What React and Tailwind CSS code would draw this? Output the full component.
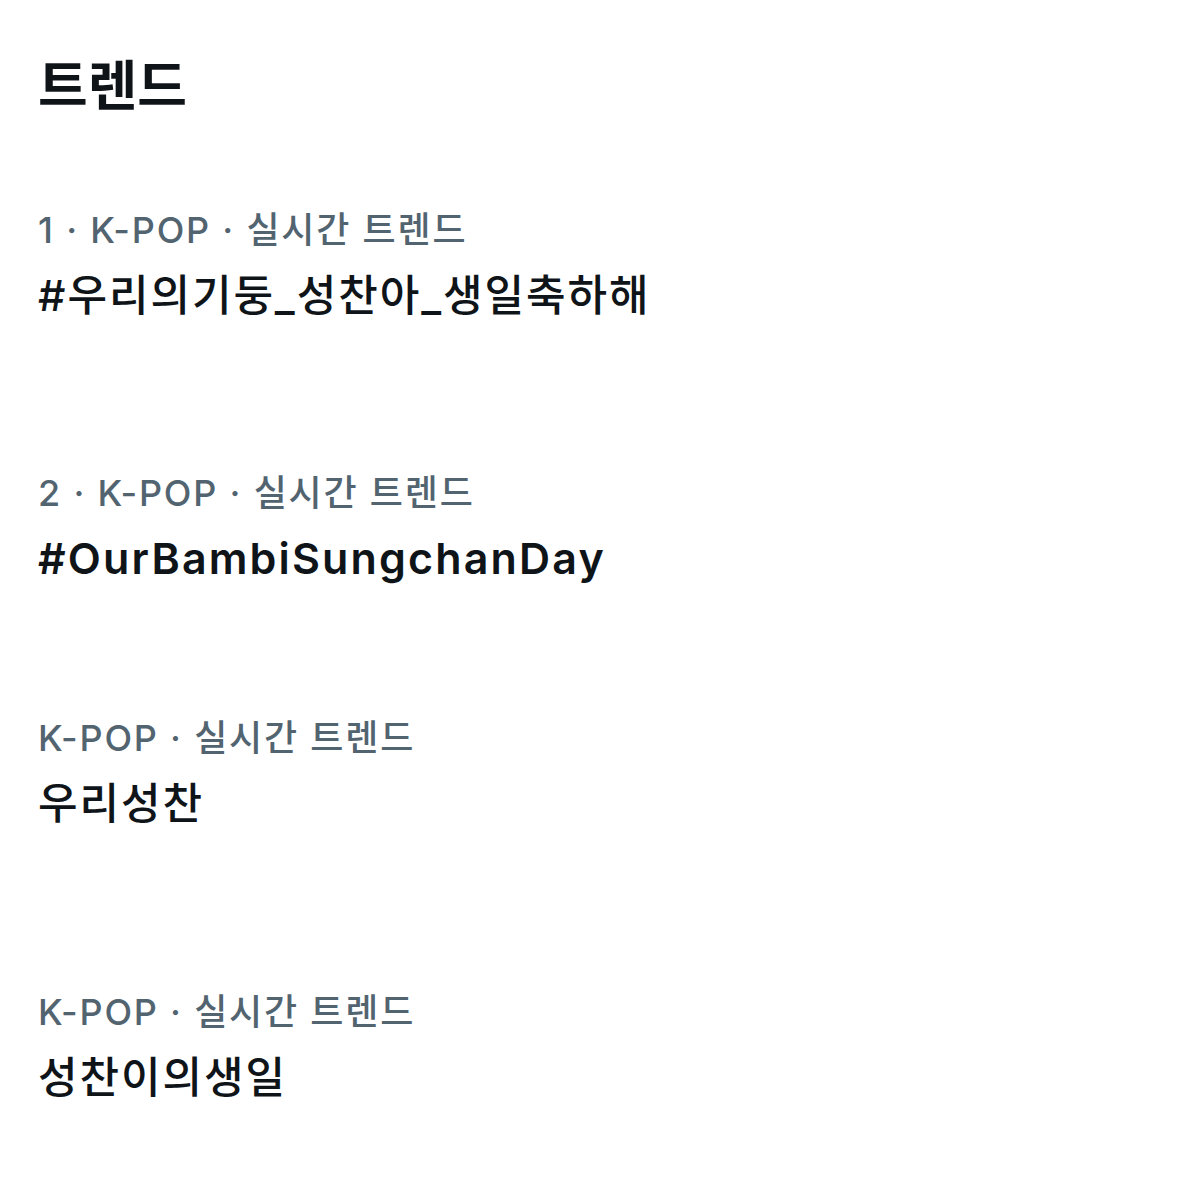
const trends = [
  { meta: '1 · K-POP · 실시간 트렌드', name: '#우리의기둥_성찬아_생일축하해', gap: 'mt-0' },
  { meta: '2 · K-POP · 실시간 트렌드', name: '#OurBambiSungchanDay', gap: 'mt-[150px]', latin: true },
  { meta: 'K-POP · 실시간 트렌드', name: '우리성찬', gap: 'mt-[132px]' },
  { meta: 'K-POP · 실시간 트렌드', name: '성찬이의생일', gap: 'mt-[161px]' },
]

export default function App() {
  return (
    <div
      className="min-h-screen w-[1200px] bg-white pl-[38px] pt-[55px]"
      style={{ fontFamily: 'Inter, "Noto Sans CJK KR", sans-serif' }}
    >
      {/* Header */}
      <h1 className="text-[54px] leading-[64px] font-bold text-[#0f1419]">트렌드</h1>

      {/* Trend list */}
      <div className="mt-[89px] flex flex-col">
        {trends.map((t, i) => (
          <div key={i} className={t.gap}>
            <div className="text-[36px] leading-[44px] tracking-[1.8px] text-[#536471] font-medium">{t.meta}</div>
            <div
              className={
                t.latin
                  ? 'mt-[17px] text-[43px] leading-[52px] tracking-[0.05em] font-semibold text-[#0f1419]'
                  : 'mt-[17px] text-[43px] leading-[52px] tracking-[0.045em] font-medium text-[#0f1419]'
              }
            >
              {t.name}
            </div>
          </div>
        ))}
      </div>
    </div>
  )
}
